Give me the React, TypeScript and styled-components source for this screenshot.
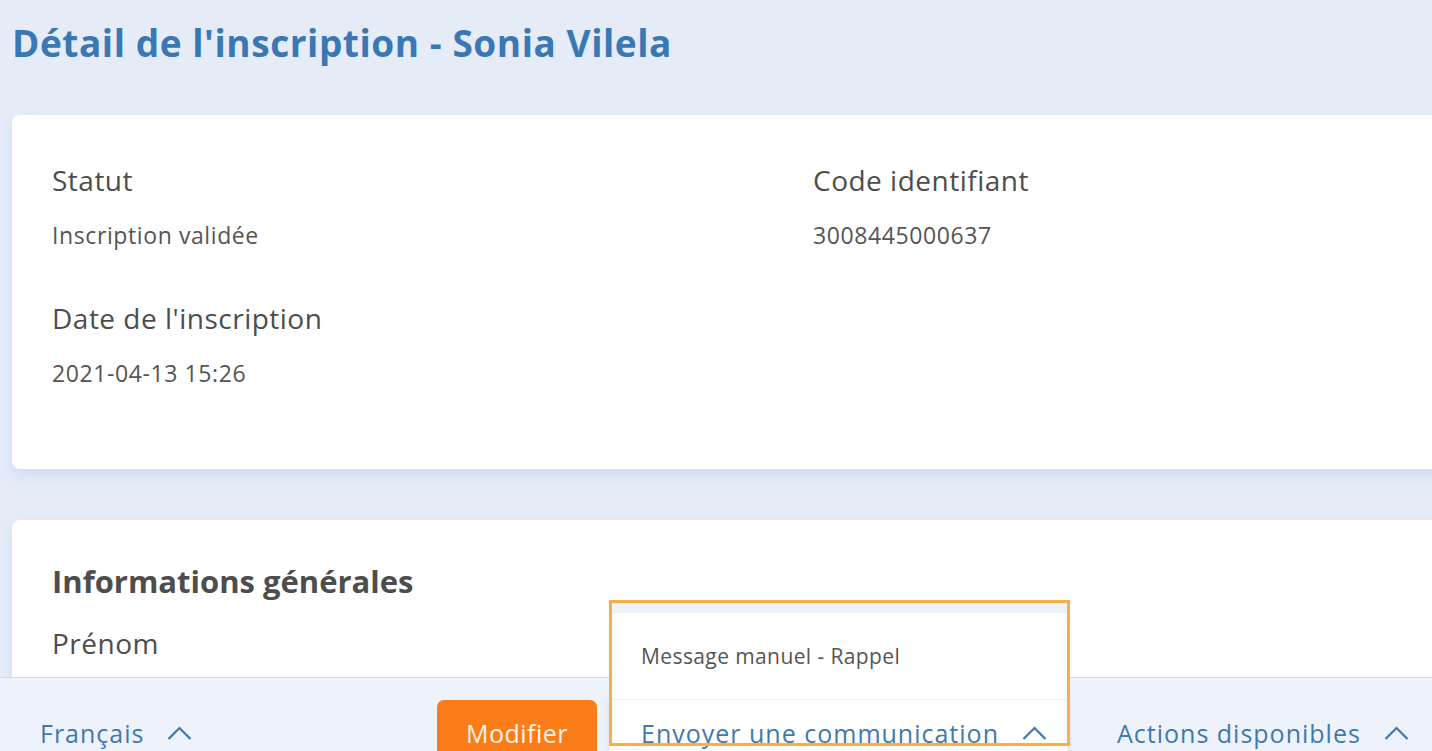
import styled, { createGlobalStyle } from 'styled-components';

const GlobalStyle = createGlobalStyle`
  html, body {
    margin: 0;
    padding: 0;
    overflow: hidden;
    background: #e5ecf8;
    font-family: "Open Sans", Lato, sans-serif;
  }
`;

const Page = styled.div`
  min-height: 751px;
  padding: 23px 0 0 12px;
  box-sizing: border-box;
`;

const Title = styled.h1`
  margin: 0 0 52px;
  font-size: 37px;
  line-height: 40px;
  font-weight: 700;
  letter-spacing: 0.55px;
  color: #3a78b4;
`;

const Card = styled.section<{ $top?: number; $bottom?: number }>`
  background: #ffffff;
  border-radius: 8px 0 0 8px;
  margin-right: -20px;
  margin-bottom: 51px;
  padding: ${(p) => p.$top ?? 49}px 40px ${(p) => p.$bottom ?? 83}px;
  box-shadow: 0 6px 14px rgba(120, 150, 210, 0.18);
`;

const FieldGrid = styled.div`
  display: grid;
  grid-template-columns: 761px 1fr;
  row-gap: 54px;
`;

const Field = styled.div`
  display: flex;
  flex-direction: column;
  gap: 26px;
`;

const Label = styled.div`
  font-size: 28px;
  line-height: 32px;
  color: #4d4d4d;
  font-weight: 500;
  letter-spacing: 0.5px;
`;

const Value = styled.div`
  font-size: 23px;
  line-height: 26px;
  color: #555555;
  letter-spacing: 0.6px;
`;

const SectionTitle = styled.h2`
  margin: 0 0 29px;
  font-size: 31px;
  line-height: 34px;
  font-weight: 700;
  color: #4d4d4d;
`;

const Footer = styled.footer`
  position: fixed;
  left: 0;
  right: 0;
  top: 677px;
  height: 120px;
  box-sizing: border-box;
  padding: 22px 0 0 40px;
  background: #eef3fb;
  border-top: 1px solid #d3dbe8;
  display: grid;
  grid-template-columns: 397px 172px 508px auto;
  align-items: start;
`;

const Toggle = styled.div<{ $pad?: number }>`
  display: flex;
  align-items: center;
  gap: 23px;
  height: 66px;
  padding-left: ${(p) => p.$pad ?? 0}px;
  font-size: 25px;
  letter-spacing: 1px;
  color: #3f79ad;
  white-space: nowrap;
`;

const Button = styled.button`
  width: 160px;
  height: 66px;
  border: none;
  border-radius: 7px;
  background: #fb7d19;
  color: #fff3e6;
  font-family: inherit;
  font-size: 25px;
  letter-spacing: 0.5px;
  padding: 0;
`;

const Dropdown = styled.div`
  position: relative;
  width: 458px;
  background: #ffffff;
  box-shadow: 0 0 8px rgba(120, 150, 200, 0.2);
`;

const Menu = styled.ul`
  position: absolute;
  left: 0;
  right: 0;
  bottom: 100%;
  margin: 0;
  padding: 13px 0 0;
  list-style: none;
  background: linear-gradient(#eef2fb 0, #eef2fb 13px, #ffffff 13px);
  border-bottom: 1px solid #eef1f6;
`;

const MenuItem = styled.li`
  height: 86px;
  display: flex;
  align-items: center;
  padding-left: 32px;
  font-size: 21px;
  letter-spacing: 0.4px;
  color: #555555;
`;

const Highlight = styled.span`
  position: absolute;
  left: 0;
  top: -100px;
  width: 461px;
  height: 146px;
  box-sizing: border-box;
  border: 3px solid #f5b04c;
  pointer-events: none;
`;

const Chevron = () => (
  <svg width="25" height="14" viewBox="0 0 25 14" fill="none">
    <polyline points="1.5,13 12.5,2 23.5,13" stroke="#3f79ad" strokeWidth="2.2" />
  </svg>
);

export default function App() {
  return (
    <>
      <GlobalStyle />
      <Page>
        <Title>Détail de l'inscription - Sonia Vilela</Title>
        <Card>
          <FieldGrid>
            <Field>
              <Label>Statut</Label>
              <Value>Inscription validée</Value>
            </Field>
            <Field>
              <Label>Code identifiant</Label>
              <Value>3008445000637</Value>
            </Field>
            <Field>
              <Label>Date de l'inscription</Label>
              <Value>2021-04-13 15:26</Value>
            </Field>
          </FieldGrid>
        </Card>
        <Card $top={44} $bottom={200}>
          <SectionTitle>Informations générales</SectionTitle>
          <Label>Prénom</Label>
        </Card>
      </Page>
      <Footer>
        <Toggle>
          Français <Chevron />
        </Toggle>
        <div>
          <Button>Modifier</Button>
        </div>
        <div>
          <Dropdown>
            <Menu>
              <MenuItem>Message manuel - Rappel</MenuItem>
            </Menu>
            <Toggle $pad={32}>
              Envoyer une communication <Chevron />
            </Toggle>
            <Highlight />
          </Dropdown>
        </div>
        <Toggle>
          Actions disponibles <Chevron />
        </Toggle>
      </Footer>
    </>
  );
}
